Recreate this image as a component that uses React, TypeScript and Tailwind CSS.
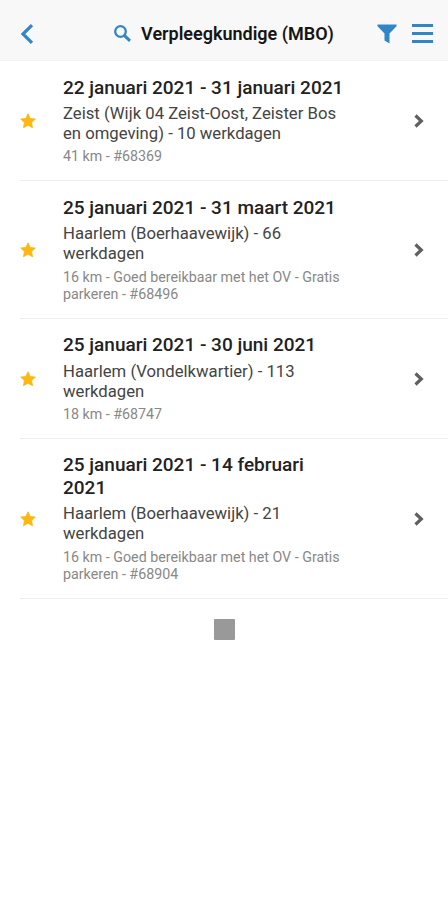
const shifts = [
  {
    period: "22 januari 2021 - 31 januari 2021",
    location: "Zeist (Wijk 04 Zeist-Oost, Zeister Bos en omgeving) - 10 werkdagen",
    details: "41 km - #68369",
  },
  {
    period: "25 januari 2021 - 31 maart 2021",
    location: "Haarlem (Boerhaavewijk) - 66 werkdagen",
    details: "16 km - Goed bereikbaar met het OV - Gratis parkeren - #68496",
  },
  {
    period: "25 januari 2021 - 30 juni 2021",
    location: "Haarlem (Vondelkwartier) - 113 werkdagen",
    details: "18 km - #68747",
  },
  {
    period: "25 januari 2021 - 14 februari 2021",
    location: "Haarlem (Boerhaavewijk) - 21 werkdagen",
    details: "16 km - Goed bereikbaar met het OV - Gratis parkeren - #68904",
  },
];

const Header = () => (
  <header className="flex h-[61px] items-center border-b border-[#f3f3f3] bg-[#f8f8f8] pt-[7px] pr-[15px] pl-5 text-[#3186c8]">
    <button aria-label="Terug">
      <svg className="h-5 w-[14px]" viewBox="0 0 14 20" fill="none" stroke="currentColor" strokeWidth="3.2">
        <path d="M12 1.2 3 10l9 8.8" />
      </svg>
    </button>

    <div className="flex flex-1 items-center justify-center pl-[37px]">
      <svg className="mr-[10px] h-[17px] w-[17px]" viewBox="0 0 17 17" fill="none" stroke="currentColor">
        <circle cx="6.5" cy="6.5" r="5.3" strokeWidth="2.3" />
        <path d="m10.3 10.3 5.7 5.5" strokeWidth="3" />
      </svg>
      <h1 className="text-[18px] font-semibold text-[#151515]">
        Verpleegkundige (MBO)
      </h1>
    </div>

    <button aria-label="Filter">
      <svg className="h-[20px] w-[20px]" viewBox="0 0 20 20" fill="currentColor">
        <path d="M.5.5h19v1.8l-7 7.2v10l-5-3V9.5L.5 2.3z" />
      </svg>
    </button>
    <button aria-label="Menu" className="ml-[15px] flex w-[21px] flex-col gap-[5px]">
      <span className="h-[3px] bg-current" />
      <span className="h-[3px] bg-current" />
      <span className="h-[3px] bg-current" />
    </button>
  </header>
);

const App = () => {
  return (
    <div className="min-h-screen bg-white font-['Roboto',sans-serif]">
      <Header />

      {/* Available shifts */}
      <ul>
        {shifts.map((shift) => (
          <li
            key={shift.details}
            className="ml-5 flex items-center border-b border-[#eeeeee] pt-[15.5px] pr-6 pb-[14.9px]"
          >
            <svg
              className="h-4 w-4 shrink-0"
              viewBox="0 0 16 16"
              fill="#fcb812"
              stroke="#fcb812"
              strokeWidth=".8"
              strokeLinejoin="round"
            >
              <path d="m8 .8 2.2 4.6 5.1.7-3.7 3.5.9 5.1L8 12.3l-4.500 2.400.9-5.100L.7 6.100l5.100-.7z" />
            </svg>

            <div className="ml-[27px] w-[284px]">
              <p className="text-[19px] leading-[22.5px] font-medium text-[#222]">
                {shift.period}
              </p>
              <p className="pt-[5px] text-[16.7px] leading-5 text-[#444]">
                {shift.location}
              </p>
              <p className="pt-[4.4px] text-[14.25px] leading-[17px] text-[#888]">
                {shift.details}
              </p>
            </div>

            <svg className="ml-auto h-[14px] w-[10px]" viewBox="0 0 10 14" fill="none" stroke="#606060" strokeWidth="3.2">
              <path d="m1.5 1.5 5.800 5.500-5.800 5.500" />
            </svg>
          </li>
        ))}
      </ul>

      {/* Loading indicator */}
      <div className="mx-auto mt-5 h-[21px] w-[21px] rounded-[1px] bg-[#999]" />
    </div>
  );
};

export default App;
